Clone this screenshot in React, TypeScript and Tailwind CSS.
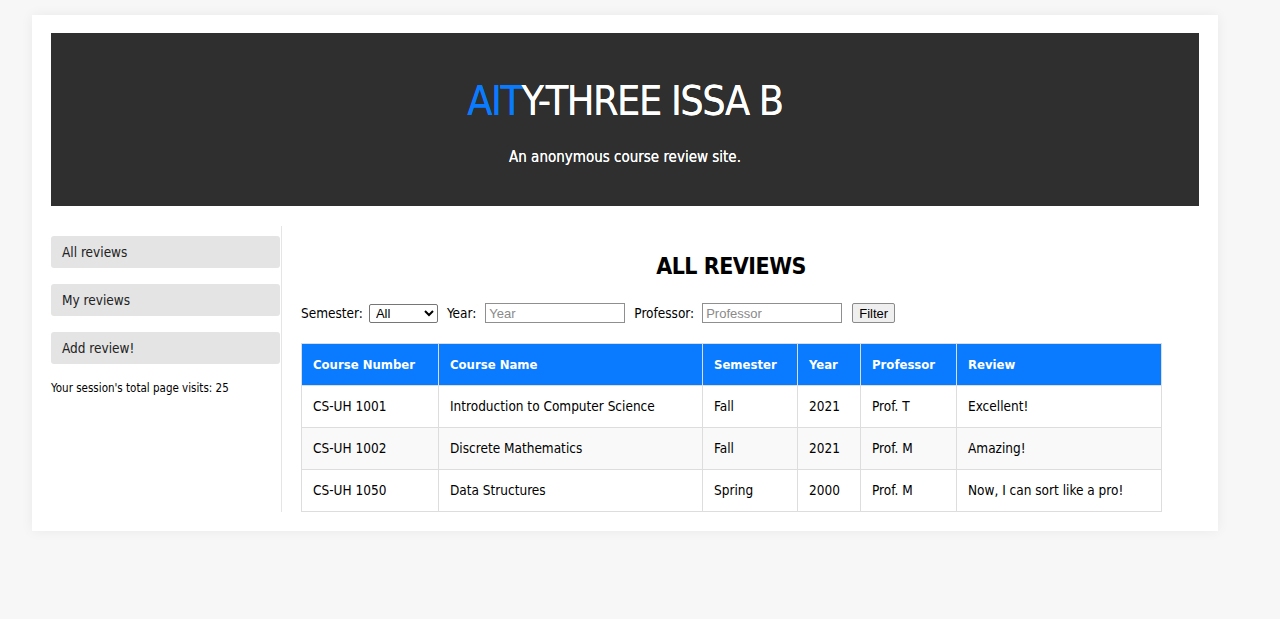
import React from "react";

const rows = [
  { num: "CS-UH 1001", name: "Introduction to Computer Science", sem: "Fall", year: "2021", prof: "Prof. T", review: "Excellent!" },
  { num: "CS-UH 1002", name: "Discrete Mathematics", sem: "Fall", year: "2021", prof: "Prof. M", review: "Amazing!" },
  { num: "CS-UH 1050", name: "Data Structures", sem: "Spring", year: "2000", prof: "Prof. M", review: "Now, I can sort like a pro!" },
];

const App: React.FC = () => {
  return (
    <div className="min-h-[619px] bg-[#f7f7f7] pt-[15px] pl-[32px] font-['Liberation_Sans_Narrow','DejaVu_Sans_Condensed',Roboto,sans-serif] text-black">
      <div className="w-[1186px] h-[516px] bg-white px-[19px] pt-[18px] shadow-[0_0_12px_rgba(0,0,0,0.06)]">
        <header className="h-[173px] bg-[#2f2f2f] flex flex-col items-center pt-[44px]">
          <h1 className="text-[41px] leading-[48px] tracking-[-1.5px] text-white [text-shadow:0_0_0.6px_white]">
            <span className="text-[#0a7bff] [text-shadow:0_0_0.6px_#0a7bff]">AIT</span>Y-THREE ISSA B
          </h1>
          <p className="mt-[21px] text-[15px] leading-[22px] text-white [text-shadow:0_0_0.4px_white]">An anonymous course review site.</p>
        </header>

        <div className="flex mt-[20px]">
          <aside className="w-[231px] h-[286px] border-r border-[#e5e5e5] pt-[10px] pr-[1px]">
            <nav className="flex flex-col gap-[16px]">
              <a className="h-[32px] bg-[#e4e4e4] rounded-[3px] pl-[11px] flex items-center text-[13.5px] text-[#222]">All reviews</a>
              <a className="h-[32px] bg-[#e4e4e4] rounded-[3px] pl-[11px] flex items-center text-[13.5px] text-[#222]">My reviews</a>
              <a className="h-[32px] bg-[#e4e4e4] rounded-[3px] pl-[11px] flex items-center text-[13.5px] text-[#222]">Add review!</a>
            </nav>
            <p className="mt-[16px] text-[11.5px] leading-[16px]">Your session's total page visits: 25</p>
          </aside>

          <main className="w-[860px] ml-[19px]">
            <h2 className="mt-[22px] text-center text-[23px] leading-[36px] font-bold tracking-[-0.5px]">ALL REVIEWS</h2>
            <div className="flex items-center mt-[18px] text-[13.5px] h-[22px]">
              <label>Semester:</label>
              <select className="ml-[6px] w-[69px] h-[19px] border border-[#767676] rounded-[2px] text-[13px] font-['Liberation_Sans',sans-serif] pl-[2px]">
                <option>All</option>
              </select>
              <label className="ml-[9px]">Year:</label>
              <input
                placeholder="Year"
                className="ml-[9px] w-[140px] h-[20px] border border-[#8f8f8f] px-[3px] text-[13px] font-['Liberation_Sans',sans-serif] placeholder:text-[#8a8a8a]"
              />
              <label className="ml-[9px]">Professor:</label>
              <input
                placeholder="Professor"
                className="ml-[8px] w-[140px] h-[20px] border border-[#8f8f8f] px-[3px] text-[13px] font-['Liberation_Sans',sans-serif] placeholder:text-[#8a8a8a]"
              />
              <button className="ml-[10px] h-[20px] px-[6px] border border-[#8a8a8a] rounded-[2px] bg-[#efefef] text-[13px] font-['Liberation_Sans',sans-serif]">
                Filter
              </button>
            </div>

            <table className="mt-[19px] w-[860px] border-collapse text-[13.5px] table-fixed">
              <colgroup>
                <col className="w-[137px]" />
                <col className="w-[264px]" />
                <col className="w-[95px]" />
                <col className="w-[63px]" />
                <col className="w-[96px]" />
                <col className="w-[205px]" />
              </colgroup>
              <thead>
                <tr className="bg-[#0a7bff] text-white h-[42px]">
                  {["Course Number", "Course Name", "Semester", "Year", "Professor", "Review"].map((h) => (
                    <th key={h} className="text-left font-bold whitespace-nowrap px-[11px] border border-[#dddddd] text-[13px]">
                      {h}
                    </th>
                  ))}
                </tr>
              </thead>
              <tbody>
                {rows.map((r, i) => (
                  <tr key={r.num} className={`h-[42px] ${i === 1 ? "bg-[#f9f9f9]" : "bg-white"}`}>
                    <td className="px-[11px] border border-[#dddddd]">{r.num}</td>
                    <td className="px-[11px] border border-[#dddddd]">{r.name}</td>
                    <td className="px-[11px] border border-[#dddddd]">{r.sem}</td>
                    <td className="px-[11px] border border-[#dddddd]">{r.year}</td>
                    <td className="px-[11px] border border-[#dddddd]">{r.prof}</td>
                    <td className="px-[11px] border border-[#dddddd]">{r.review}</td>
                  </tr>
                ))}
              </tbody>
            </table>
          </main>
        </div>
      </div>
    </div>
  );
};

export default App;
